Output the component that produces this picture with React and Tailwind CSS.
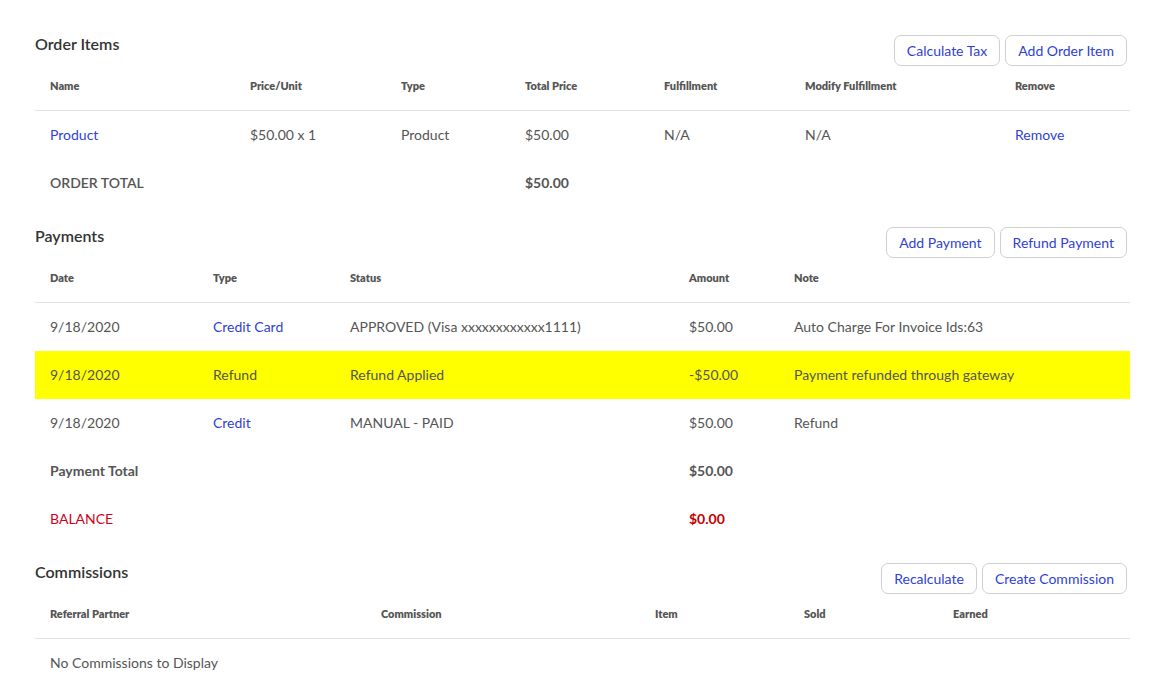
const orderCols = ["w-[200px]", "w-[151px]", "w-[124px]", "w-[139px]", "w-[141px]", "w-[210px]", "flex-1"];
const paymentCols = ["w-[163px]", "w-[137px]", "w-[339px]", "w-[105px]", "flex-1"];
const commissionCols = ["w-[331px]", "w-[274px]", "w-[149px]", "w-[149px]", "flex-1"];

function SectionHeader({ title, actions }) {
  return (
    <div className="flex items-start justify-between">
      <h2 className="text-[16px] leading-[18px] font-semibold text-[#333]">{title}</h2>
      <div className="flex gap-[5px] mr-[3px]">
        {actions.map((a) => (
          <button
            key={a}
            className="h-[31px] px-[12px] rounded-[7px] border border-[#cfcfcf] bg-white text-[14px] text-[#2f3fd6]"
          >
            {a}
          </button>
        ))}
      </div>
    </div>
  );
}

function HeadRow({ cols, labels }) {
  return (
    <div className="flex h-[45px] items-center pb-[4px] pl-[15px] border-b border-[#e3e3e3]">
      {labels.map((l, i) => (
        <div key={l} className={`${cols[i]} text-[11px] font-extrabold text-[#555]`}>
          {l}
        </div>
      ))}
    </div>
  );
}

function Row({ cols, cells, className = "" }) {
  return (
    <div className={`flex h-[48px] items-center pb-[2px] pl-[15px] text-[14px] text-[#555] ${className}`}>
      {cells.map((c, i) => (
        <div key={i} className={cols[i]}>
          {c}
        </div>
      ))}
    </div>
  );
}

const link = (t) => <span className="text-[#2f3fd6]">{t}</span>;

export default function App() {
  return (
    <div className="bg-white min-h-[680px] px-[35px] pt-[35px] pr-[44px] font-['Lato',sans-serif]">
      {/* Order items */}
      <SectionHeader title="Order Items" actions={["Calculate Tax", "Add Order Item"]} />
      <HeadRow
        cols={orderCols}
        labels={["Name", "Price/Unit", "Type", "Total Price", "Fulfillment", "Modify Fulfillment", "Remove"]}
      />
      <Row
        cols={orderCols}
        cells={[link("Product"), "$50.00 x 1", "Product", "$50.00", "N/A", "N/A", link("Remove")]}
      />
      <Row
        cols={orderCols}
        className="font-semibold"
        cells={["ORDER TOTAL", "", "", <span className="font-bold">$50.00</span>, "", "", ""]}
      />

      {/* Payments */}
      <div className="mt-[20px]">
        <SectionHeader title="Payments" actions={["Add Payment", "Refund Payment"]} />
        <HeadRow cols={paymentCols} labels={["Date", "Type", "Status", "Amount", "Note"]} />
        <Row
          cols={paymentCols}
          cells={["9/18/2020", link("Credit Card"), "APPROVED (Visa xxxxxxxxxxxx1111)", "$50.00", "Auto Charge For Invoice Ids:63"]}
        />
        <Row
          cols={paymentCols}
          className="bg-[#ffff00]"
          cells={["9/18/2020", "Refund", "Refund Applied", "-$50.00", "Payment refunded through gateway"]}
        />
        <Row
          cols={paymentCols}
          cells={["9/18/2020", link("Credit"), "MANUAL - PAID", "$50.00", "Refund"]}
        />
        <Row
          cols={paymentCols}
          className="font-bold"
          cells={["Payment Total", "", "", "$50.00", ""]}
        />
        <Row
          cols={paymentCols}
          cells={[
            <span className="text-[#d0021b]">BALANCE</span>,
            "",
            "",
            <span className="font-bold text-[#c40000]">$0.00</span>,
            "",
          ]}
        />
      </div>

      {/* Commissions */}
      <div className="mt-[20px]">
        <SectionHeader title="Commissions" actions={["Recalculate", "Create Commission"]} />
        <HeadRow
          cols={commissionCols}
          labels={["Referral Partner", "Commission", "Item", "Sold", "Earned"]}
        />
        <div className="flex h-[48px] items-center pb-[2px] pl-[15px] text-[14px] text-[#555]">
          No Commissions to Display
        </div>
      </div>
    </div>
  );
}
